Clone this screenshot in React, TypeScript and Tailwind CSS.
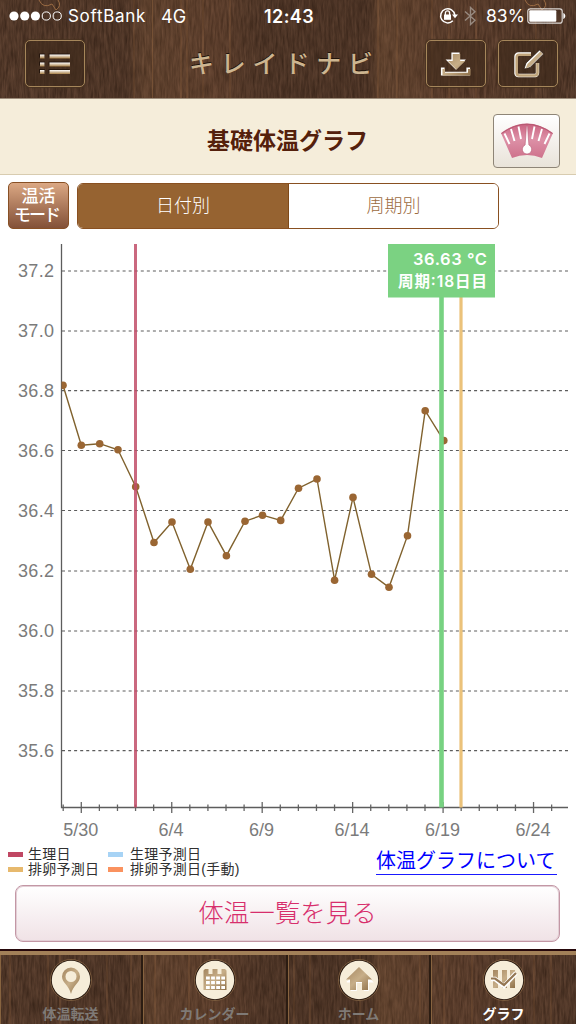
import type { ReactNode } from "react";
import clsx from "clsx";

const JP = "font-['Liberation_Sans','Noto_Sans_CJK_JP',sans-serif]";

const points = [
  [63, 385.3], [81.3, 445.2], [99.7, 443.7], [118, 449.8], [135.7, 486.7],
  [154, 542.5], [172, 522], [190.3, 569.3], [208, 522], [226.4, 555.7],
  [245, 521.2], [262.5, 515.2], [280.7, 520.4], [298.5, 488.2], [317, 479],
  [334.6, 580.2], [353, 497.4], [371.5, 574.3], [389, 587.3], [407.5, 535.7],
  [425.2, 410.7], [443.8, 440.6],
];

const gridLines = [
  { y: 271, label: "37.2" },
  { y: 331, label: "37.0" },
  { y: 390.6, label: "36.8" },
  { y: 450.5, label: "36.6" },
  { y: 510.5, label: "36.4" },
  { y: 571, label: "36.2" },
  { y: 631, label: "36.0" },
  { y: 691, label: "35.8" },
  { y: 750.7, label: "35.6" },
];

const dates: Record<number, string> = {
  1: "5/30",
  6: "6/4",
  11: "6/9",
  16: "6/14",
  21: "6/19",
  26: "6/24",
};

const ticks = Array.from({ length: 28 }, (_, i) => ({
  x: 63.2 + i * 18.09,
  label: dates[i],
}));

function Wood({ id, height, streaks }: { id: string; height: number; streaks: number[] }) {
  return (
    <svg className="absolute inset-0" width="576" height={height} aria-hidden="true">
      <defs>
        <filter id={`${id}-grain`} x="0" y="0" width="100%" height="100%" colorInterpolationFilters="sRGB">
          <feTurbulence type="fractalNoise" baseFrequency="0.45 0.06" numOctaves="3" seed="8" />
          <feColorMatrix
            values="0 0 0 0.22 0.21
                    0 0 0 0.17 0.135
                    0 0 0 0.14 0.09
                    0 0 0 0 1"
          />
        </filter>
        <linearGradient id={`${id}-planks`}>
          <stop offset="0" stopColor="#2e1c12" stopOpacity="0.05" />
          <stop offset="0.22" stopColor="#2e1c12" stopOpacity="0.15" />
          <stop offset="0.25" stopColor="#8b603c" stopOpacity="0.2" />
          <stop offset="0.38" stopColor="#7a4d32" stopOpacity="0.2" />
          <stop offset="0.46" stopColor="#2e1c12" stopOpacity="0.15" />
          <stop offset="0.64" stopColor="#2e1c12" stopOpacity="0.2" />
          <stop offset="0.66" stopColor="#8b603c" stopOpacity="0.25" />
          <stop offset="0.82" stopColor="#70452e" stopOpacity="0.15" />
          <stop offset="1" stopColor="#2e1c12" stopOpacity="0.1" />
        </linearGradient>
      </defs>
      <rect width="576" height={height} filter={`url(#${id}-grain)`} />
      <rect width="576" height={height} fill={`url(#${id}-planks)`} />
      {streaks.map((x) => (
        <path key={x} d={`M${x} 0V${height}`} stroke="#9a6b43" strokeOpacity="0.4" />
      ))}
    </svg>
  );
}

function GoldGradient({ id }: { id: string }) {
  return (
    <linearGradient id={id} x1="0" y1="0" x2="1" y2="1">
      <stop offset="0" stopColor="#a48660" />
      <stop offset="0.5" stopColor="#c7ae88" />
      <stop offset="1" stopColor="#8f7048" />
    </linearGradient>
  );
}

function StatusBar() {
  return (
    <div className="relative flex h-8 items-center font-['Inter',sans-serif] text-[17px] text-white">
      <svg className="ml-[9px]" width="54" height="12" fill="none" stroke="#fff">
        {[5, 15.7, 26.4].map((x) => (
          <circle key={x} cx={x} cy="6" r="4.6" fill="#fff" stroke="none" />
        ))}
        <circle cx="37.3" cy="6" r="4.1" />
        <circle cx="48.2" cy="6" r="4.1" />
      </svg>
      <span className="mt-px ml-[5px] w-[79px] text-[17px] tracking-[0.7px] whitespace-nowrap">SoftBank</span>
      <span className="mt-px ml-[14px] w-[103px] text-[18px]">4G</span>
      <span className="w-[175px] text-[18px] font-semibold tracking-[0.4px]">12:43</span>
      <svg width="19" height="18" viewBox="0 0 19 18" fill="none" stroke="#fff" strokeWidth="1.5">
        <path d="M15.8 8A7.1 7.1 0 1 0 13.8 13.8" />
        <path d="M13 7.5h6l-3 3.8z" fill="#fff" stroke="none" />
        <rect x="5" y="7.5" width="7" height="5.3" fill="#fff" stroke="none" />
        <path d="M6.4 8V6a2.1 2.1 0 0 1 4.2 0v2" strokeWidth="1.3" />
      </svg>
      <svg className="ml-[6px]" width="13" height="20" fill="none" stroke="#988a80" strokeWidth="1.4">
        <path d="M1 5.5 11 14.2 6.5 18.5V1.5L11 5.8 1 14.5" />
      </svg>
      <span className="ml-[9px] w-[41px] text-[17.5px]">83%</span>
      <svg width="39" height="16" fill="none">
        <rect x="0.8" y="0.8" width="34.4" height="14.4" rx="2.5" stroke="#fff" strokeOpacity="0.8" strokeWidth="1.2" />
        <rect x="2.3" y="2.3" width="27" height="11.4" rx="1" fill="#fff" />
        <path d="M36.3 5v6c1.3-.5 2-1.6 2-3s-.7-2.5-2-3z" fill="#fff" />
      </svg>
    </div>
  );
}

function HeaderButton({ children }: { children: ReactNode }) {
  return (
    <button className="flex h-[47px] w-[60px] items-center justify-center rounded-[5px] border-[1.5px] border-[#a5865a] bg-[#3d291b]/60 shadow-[0_0_1px_1px_#4a3322]">
      {children}
    </button>
  );
}

function Header() {
  return (
    <header className="relative h-[98px] shrink-0 overflow-hidden bg-[#4d3527]">
      <Wood id="top" height={98} streaks={[134, 152.5, 181, 187, 203, 230, 378, 397, 432, 449, 476, 536]} />
      <svg className="absolute top-0 left-0" width="576" height="14" fill="none" stroke="#9a6b43">
        <path d="M39 0q4 9 13 4l4 6q6-4 2-10M525 0q4 9 13 4l4 6q6-4 2-10" />
      </svg>
      <StatusBar />
      <div className="relative flex pt-2 pl-[25px]">
        <HeaderButton>
          <svg width="32" height="22" viewBox="0 0 32 22">
            <defs>
              <linearGradient id="bar" x2="0" y2="1">
                <stop offset="0" stopColor="#fff" />
                <stop offset="1" stopColor="#a98148" />
              </linearGradient>
            </defs>
            {[1.5, 9.5, 17].map((y) => (
              <g key={y}>
                <rect x="0" y={y - 1} width="6" height="4" fill="#26170e" />
                <rect x="9.5" y={y - 1} width="21" height="4" fill="#26170e" />
                <rect x="1" y={y} width="4.5" height="4" fill="url(#bar)" />
                <rect x="10.5" y={y} width="20.5" height="4" fill="url(#bar)" />
              </g>
            ))}
          </svg>
        </HeaderButton>
        <h1
          className={clsx(
            JP,
            "mt-px ml-[104px] w-[237px] text-[25px] leading-[47px] font-medium tracking-[6.8px] whitespace-nowrap text-[#cdb590] [text-shadow:0_-1px_0_#20130b]",
          )}
        >
          キレイドナビ
        </h1>
        <HeaderButton>
          <svg width="32" height="26" viewBox="0 0 32 26">
            <defs>
              <GoldGradient id="download" />
            </defs>
            <g stroke="#fff" strokeWidth="1.2" fill="#fff">
              <path d="M12 2h7v7h5.5L16 18 7 9h5zM1.500 17v7h28v-7H27v4.300H4V17z" />
            </g>
            <path d="M12.7 3h7.500v7h5L16.300 18.500 8 10h4.700zM2.500 18v6.500h28V18H28v3.800H5V18z" fill="url(#download)" />
          </svg>
        </HeaderButton>
        <div className="ml-[12px]">
          <HeaderButton>
            <svg width="32" height="30" viewBox="0 0 32 30" fill="none">
              <defs>
                <GoldGradient id="edit" />
              </defs>
              <path d="M19 5H6.500A2.500 2.500 0 0 0 4 7.500V24.500A2.500 2.500 0 0 0 6.500 26.500H23A2.500 2.500 0 0 0 25.500 24V14" stroke="#fff" strokeWidth="3.400" />
              <path d="M19 5.700H7A2.500 2.500 0 0 0 4.700 8V24A2.500 2.500 0 0 0 7 26.500H23A2.500 2.500 0 0 0 25.500 24V14" stroke="#c0a47a" strokeWidth="2.600" />
              <path d="m12 20 2-6L27.500 1l4 4L18 18.500z" fill="#fff" stroke="#2b1a10" strokeWidth="0.700" />
              <path d="m13.500 19.500 2-4.500L28.300 2.500l2.300 2.300L18 17.500z" fill="url(#edit)" />
            </svg>
          </HeaderButton>
        </div>
      </div>
    </header>
  );
}

function Gauge() {
  return (
    <svg width="54" height="36" viewBox="0 0 54 36">
      <defs>
        <linearGradient id="gauge" x2="0" y2="1">
          <stop offset="0" stopColor="#c9627f" />
          <stop offset="0.45" stopColor="#dd91a7" />
          <stop offset="1" stopColor="#ce728c" />
        </linearGradient>
      </defs>
      <path d="M1 10Q27-9 53 10L42 35Q27 29 12 35z" fill="url(#gauge)" />
      <path d="M1.500 10.500Q27-8 52.500 10.500" fill="none" stroke="#b75871" />
      <g stroke="#fff" strokeWidth="1.900">
        <path d="M4.500 10.500 9.500 21M11 6l3.500 12M18.500 3.500 21 16M34.500 3.500 32 16M42 6l-3.500 12M49.500 10.500 44.500 21" />
      </g>
      <path d="M26.500 3h1l1.400 19a4.700 4.700 0 1 1-3.800 0z" fill="#fff" stroke="#b85e77" strokeWidth="0.600" />
    </svg>
  );
}

function Chart() {
  return (
    <svg className="block shrink-0" width="576" height="616" viewBox="0 229 576 616">
      <g className="font-['Liberation_Sans',sans-serif] text-[18px]" fill="#7b7b7b">
        {gridLines.map(({ y, label }) => (
          <g key={label}>
            <path d={`M62 ${y}H568`} stroke="#5c5c5c" strokeWidth="1.200" strokeDasharray="3 3.060" />
            <text x="54" y={y + 6} textAnchor="end" textLength="36">
              {label}
            </text>
          </g>
        ))}
        {ticks.map(({ x, label }) => (
          <g key={x}>
            <path d={label ? `M${x} 802V813` : `M${x} 804.500V811`} stroke="#666" strokeWidth="1.300" />
            {label && (
              <text x={x - 0.6} y="836" textAnchor="middle">
                {label}
              </text>
            )}
          </g>
        ))}
      </g>
      <path d="M61.500 244V807.500H568" fill="none" stroke="#5d5d5d" strokeWidth="1.300" />
      <polyline points={points.join(" ")} fill="none" stroke="#80622e" strokeWidth="1.400" />
      <clipPath id="plot">
        <rect x="61.500" y="244" width="507" height="564" />
      </clipPath>
      <g fill="#9a6633" clipPath="url(#plot)">
        {points.map(([x, y]) => (
          <circle key={x} cx={x} cy={y} r="3.800" />
        ))}
      </g>
      <path d="M135.500 244V807.500" stroke="#c14d68" strokeOpacity="0.850" strokeWidth="3" />
      <path d="M461 244V807.500" stroke="#ebc27a" strokeWidth="3.200" />
      <path d="M441.500 244V807.500" stroke="#77d281" strokeWidth="4.600" />
      <rect x="388" y="244" width="107" height="53.500" fill="#7bd282" />
      <g fill="#fff" fontWeight="600" textAnchor="end">
        <text x="487" y="265" className="font-['Inter','Noto_Sans_CJK_JP',sans-serif] text-[16.5px]" textLength="74">
          36.63 °C
        </text>
        <text x="487" y="286.500" className="font-['Inter','Noto_Sans_CJK_JP',sans-serif] text-[15.5px]" textLength="89">
          周期:18日目
        </text>
      </g>
    </svg>
  );
}

function LegendItem({ swatch, children }: { swatch: string; children: ReactNode }) {
  return (
    <div className="flex h-[15px] items-center gap-[5px] text-[14px] leading-[15px] tracking-[0.25px] whitespace-nowrap text-[#303030]">
      <span className={clsx("h-[5px] w-[15px]", swatch)} />
      {children}
    </div>
  );
}

function TabItem({ label, active, children }: { label: string; active?: boolean; children: ReactNode }) {
  return (
    <button className="relative flex flex-col items-center border-r-2 border-[#2b1c12] pt-[4px] shadow-[inset_1px_0_0_#87633f] last:border-r-0">
      <svg width="42" height="42" viewBox="0 0 42 42">
        <circle cx="21" cy="21" r="20.500" fill="#24150d" stroke="#8c6947" strokeWidth="0.800" />
        <circle cx="21" cy="21" r="19.200" fill="#f6edd9" />
        {children}
      </svg>
      <span
        className={clsx(
          JP,
          "mt-[4px] text-[14px] leading-[18px] font-bold whitespace-nowrap",
          active ? "text-white" : "text-[#7f7a76]",
        )}
      >
        {label}
      </span>
    </button>
  );
}

function TabBar() {
  return (
    <nav className="relative h-[75px] shrink-0 overflow-hidden bg-[#4d3527]">
      <Wood id="tabs" height={75} streaks={[10, 48, 60, 107, 131, 155, 189, 294, 310, 360, 420, 444, 472, 534, 551]} />
      <div className="relative h-[6px] border-t-2 border-[#26080b] bg-[#a28058]" />
      <div className="relative grid h-[69px] grid-cols-[143px_145px_143px_145px]">
        <TabItem label="体温転送">
          <defs>
            <GoldGradient id="gold" />
          </defs>
          <path fillRule="evenodd" d="M21 8.500a9 9 0 0 0-9 9C12 24 19 26 21 35c2-9 9-11 9-17.500a9 9 0 0 0-9-9zm0 3.500a5.500 5.500 0 1 1 0 11 5.500 5.500 0 0 1 0-11z" fill="url(#gold)" />
        </TabItem>
        <TabItem label="カレンダー">
          <path d="M11 10h3.500v5h4v-5h5v5h4v-5H31l1.500 1.500V31h-23V11.500z" fill="url(#gold)" />
          {[17.5, 22.2, 27].map((y) => (
            <path key={y} d={`M12 ${y + 1.5}H31`} stroke="#fff" strokeWidth="3.200" strokeDasharray="3.800 1.300" />
          ))}
        </TabItem>
        <TabItem label="ホーム">
          <path d="M21.500 9 9 21h-1v1.500h4V31h6v-8h7v8h5v-8.500h5z" fill="#fff" transform="translate(0.800 1)" />
          <path d="M21 8 8 20.500h4V31h6v-8h6v8h6V20.500h4z" fill="url(#gold)" />
        </TabItem>
        <TabItem label="グラフ" active>
          <path d="M10 11h5v18h-5zM19 11h5v18h-5zM27 11h5v18h-5z" fill="url(#gold)" />
          <path d="M8 20h4l9 7L33 14" fill="none" stroke="#fff" strokeWidth="4.500" />
          <path d="M8 19.500h4l9 6.500L33 14" fill="none" stroke="#947652" strokeWidth="2.200" />
        </TabItem>
      </div>
    </nav>
  );
}

export default function App() {
  return (
    <div className="flex h-[1024px] w-[576px] flex-col overflow-hidden bg-white">
      <Header />

      <div className="relative flex h-[77px] shrink-0 items-center justify-end border-t border-b border-t-[#9c8c7a] border-b-[#d8ccb0] bg-[#f5edda] pt-[9px] pr-4">
        <h2 className={clsx(JP, "mr-[125px] text-[23px] leading-[34px] font-bold whitespace-nowrap text-[#54200c]")}>
          基礎体温グラフ
        </h2>
        <button className="flex h-[54px] w-[67px] items-center justify-center rounded-[4px] border-[1.5px] border-[#8e8577] bg-linear-to-b from-white to-[#e9e3d9]">
          <Gauge />
        </button>
      </div>

      <div className={clsx(JP, "flex h-[54px] shrink-0 gap-2 pt-[7px] pl-2")}>
        <button className="h-[47px] w-[61px] rounded-[5px] border border-[#885025] bg-linear-to-b from-[#dba884] to-[#835138] pt-px text-[17px] leading-[19px] font-medium text-white">
          温活
          <br />
          <span className="-ml-1 tracking-[-2px]">モード</span>
        </button>
        <div className="mt-px flex h-[46px] w-[422px] overflow-hidden rounded-[6px] border border-[#895021] text-[18px]">
          <button className="w-[211px] border-r border-[#7f4918] bg-[#966331] pt-px font-light text-white">日付別</button>
          <button className="flex-1 bg-white pt-px font-light text-[#9c6b40]">周期別</button>
        </div>
      </div>

      <Chart />

      <div className={clsx(JP, "flex h-[40px] shrink-0 pl-2")}>
        <div className="grid w-[368px] grid-cols-[100px_1fr] content-start pt-[2px]">
          <LegendItem swatch="bg-[#c04763]">生理日</LegendItem>
          <LegendItem swatch="bg-[#a7d3f5]">
            <span className="ml-[2px]">生理予測日</span>
          </LegendItem>
          <LegendItem swatch="bg-[#e7b96d]">排卵予測日</LegendItem>
          <LegendItem swatch="bg-[#fa925f]">
            <span className="ml-[2px]">排卵予測日(手動)</span>
          </LegendItem>
        </div>
        <a className="h-[30px] w-[181px] border-b border-[#1919ff] pt-px text-[20px] leading-[30px] whitespace-nowrap text-[#0000ff]">
          体温グラフについて
        </a>
      </div>

      <div className="h-[64px] shrink-0 px-[15px] pr-4">
        <button
          className={clsx(
            JP,
            "h-[57px] w-full rounded-[8px] border border-[#c397a5] bg-linear-to-b from-white to-[#f0e2e6] text-[25.5px] font-light text-[#d72e6c] shadow-[inset_0_0_0_1px_#e3cfd6]",
          )}
        >
          体温一覧を見る
        </button>
      </div>

      <TabBar />
    </div>
  );
}
